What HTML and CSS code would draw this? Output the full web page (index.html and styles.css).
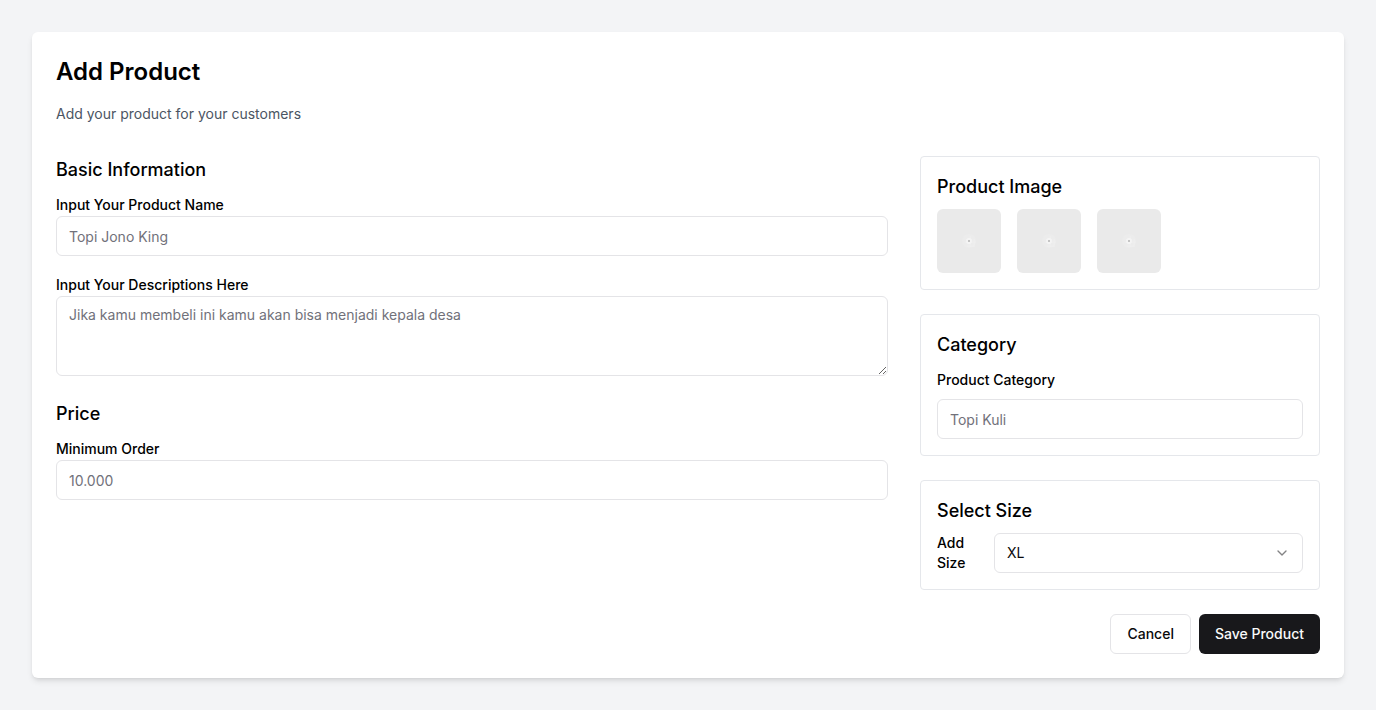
FILE: index.html
```html
<!DOCTYPE html>
<html lang="en">
<head>
<meta charset="utf-8">
<meta name="viewport" content="width=device-width, initial-scale=1">
<title>Add Product</title>
<link rel="stylesheet" href="styles.css">
</head>
<body>
<svg class="sprite" aria-hidden="true">
  <symbol id="placeholder" viewBox="0 0 64 64">
    <rect width="64" height="64" fill="#eaeaea"/>
    <circle cx="32" cy="32" r="7" fill="#ececec"/>
    <path d="M33 27v11M28 33h11M30 37h7M37 30v8" stroke="#efefef" stroke-width="1"/>
    <circle cx="32" cy="32" r="3" fill="#f4f4f4"/>
    <rect x="31" y="31" width="2" height="2" fill="#c4c4c4"/>
  </symbol>
</svg>
<main class="page">
  <form class="card">
    <header>
      <h1 class="title">Add Product</h1>
      <p class="subtitle">Add your product for your customers</p>
    </header>
    <div class="columns">
      <div class="main">
        <section>
          <h2 class="heading">Basic Information</h2>
          <div class="fields">
            <div class="field">
              <label for="name">Input Your Product Name</label>
              <input class="control" id="name" type="text" placeholder="Topi Jono King">
            </div>
            <div class="field">
              <label for="description">Input Your Descriptions Here</label>
              <textarea class="control area" id="description" placeholder="Jika kamu membeli ini kamu akan bisa menjadi kepala desa"></textarea>
            </div>
          </div>
        </section>
        <section>
          <h2 class="heading">Price</h2>
          <div class="field">
            <label for="minimum">Minimum Order</label>
            <input class="control" id="minimum" type="text" placeholder="10.000">
          </div>
        </section>
      </div>
      <div class="side">
        <section class="panel">
          <h2 class="heading">Product Image</h2>
          <div class="images">
            <svg class="image" role="img" aria-label="Product image 1"><use href="#placeholder"/></svg>
            <svg class="image" role="img" aria-label="Product image 2"><use href="#placeholder"/></svg>
            <svg class="image" role="img" aria-label="Product image 3"><use href="#placeholder"/></svg>
          </div>
        </section>
        <section class="panel">
          <h2 class="heading">Category</h2>
          <div class="field spaced">
            <label for="category">Product Category</label>
            <input class="control" id="category" type="text" placeholder="Topi Kuli">
          </div>
        </section>
        <section class="panel">
          <h2 class="heading">Select Size</h2>
          <div class="size">
            <label class="size-label" for="size">Add Size</label>
            <div class="picker">
              <select class="control select" id="size">
                <option>S</option>
                <option>M</option>
                <option>L</option>
                <option selected>XL</option>
              </select>
              <svg class="chevron" viewBox="0 0 24 24" aria-hidden="true"><path d="m6 9 6 6 6-6"/></svg>
            </div>
          </div>
        </section>
        <div class="actions">
          <button class="button" type="button">Cancel</button>
          <button class="button primary" type="submit">Save Product</button>
        </div>
      </div>
    </div>
  </form>
</main>
</body>
</html>
```
FILE: styles.css
```css
*, *::before, *::after {
  box-sizing: border-box;
}

body {
  margin: 0;
  background: #f3f4f6;
  color: #000;
  font: 16px/24px Inter, "Liberation Sans", sans-serif;
}

.sprite {
  display: none;
}

.page {
  padding: 32px;
}

.card {
  padding: 24px;
  border-radius: 6px;
  background: #fff;
  box-shadow: 0 4px 6px -1px rgb(0 0 0 / 0.1), 0 2px 4px -2px rgb(0 0 0 / 0.1);
}

.title {
  margin: 0 0 16px;
  font-size: 24px;
  line-height: 32px;
  font-weight: 600;
}

.subtitle {
  margin: 0 0 32px;
  color: #4b5563;
  font-size: 14px;
  line-height: 20px;
}

.columns {
  display: grid;
  grid-template-columns: repeat(3, minmax(0, 1fr));
  gap: 32px;
}

.main {
  grid-column: span 2;
}

.main,
.side {
  display: flex;
  flex-direction: column;
  gap: 24px;
}

.heading {
  margin: 0 0 8px;
  font-size: 18px;
  line-height: 28px;
  font-weight: 500;
}

.fields {
  display: flex;
  flex-direction: column;
  gap: 16px;
}

label {
  font-size: 14px;
  line-height: 14px;
  font-weight: 500;
}

.control {
  display: block;
  width: 100%;
  height: 40px;
  margin: 0;
  padding: 8px 12px;
  border: 1px solid #e4e4e7;
  border-radius: 6px;
  background: #fff;
  color: #09090b;
  font: 14px/20px Inter, "Liberation Sans", sans-serif;
}

.control::placeholder {
  color: #71717a;
  opacity: 1;
}

.area {
  height: 80px;
  resize: vertical;
}

.spaced .control {
  margin-top: 8px;
}

.panel {
  padding: 16px;
  border: 1px solid #e5e7eb;
  border-radius: 4px;
}

.images {
  display: flex;
  gap: 16px;
}

.image {
  width: 64px;
  height: 64px;
  border-radius: 6px;
}

.size {
  display: flex;
  align-items: center;
  gap: 16px;
}

.size-label {
  flex: none;
  width: 41px;
  line-height: 20px;
}

.picker {
  position: relative;
  flex: 1;
}

.select {
  appearance: none;
}

.chevron {
  position: absolute;
  top: 12px;
  right: 13px;
  width: 16px;
  height: 16px;
  fill: none;
  stroke: #09090b;
  stroke-width: 2;
  stroke-linecap: round;
  stroke-linejoin: round;
  opacity: 0.5;
  pointer-events: none;
}

.actions {
  display: flex;
  justify-content: flex-end;
  gap: 8px;
}

.button {
  height: 40px;
  padding: 0 16px;
  border: 1px solid #e4e4e7;
  border-radius: 6px;
  background: #fff;
  color: #09090b;
  font: 500 14px/20px Inter, "Liberation Sans", sans-serif;
}

.primary {
  border: 0;
  background: #18181b;
  color: #fafafa;
}
```
